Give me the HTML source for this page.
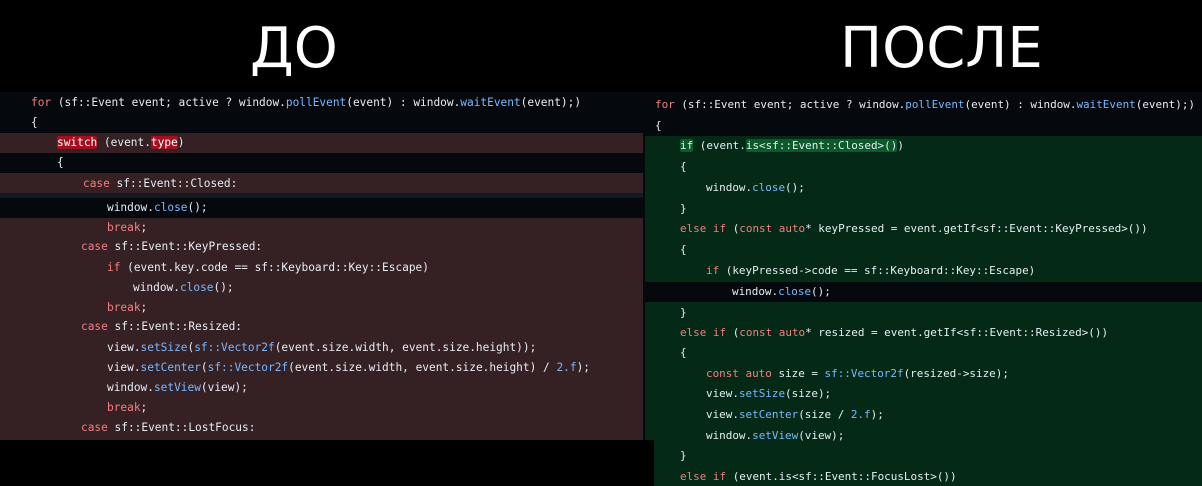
<!DOCTYPE html>
<html><head><meta charset="utf-8"><style>
body{margin:0;width:1202px;height:486px;background:#000;position:relative;overflow:hidden;font-family:"DejaVu Sans Mono","Liberation Mono",monospace;}
.t{position:absolute;top:16px;color:#fff;font-family:"DejaVu Sans","Liberation Sans",sans-serif;font-size:56px;line-height:66px;}
.p{position:absolute;background:#05080d;}
.b{position:absolute;}
.l{position:absolute;white-space:pre;color:#e6edf3;font-size:11.15px;line-height:14px;}
.r .l{font-size:10.95px;}
.k{color:#f47f7f}.f{color:#79b8ff}
.hl{background:#a40e1f;color:#fff;border-radius:2px}
.hg{background:#0b5a2a;border-radius:2px;color:#e6edf3}
</style></head><body>
<div class="t" style="left:250px">ДО</div>
<div class="t" style="left:840px">ПОСЛЕ</div>

<div class="p r" style="left:643px;top:92px;width:559px;height:394px">
<div class="b" style="left:2px;top:44px;width:557px;height:146px;background:#042a17"></div>
<div class="b" style="left:2px;top:210px;width:557px;height:184px;background:#042a17"></div>
</div>
<div class="b" style="left:643px;top:440px;width:11px;height:46px;background:#000"></div>

<div class="p" style="left:0;top:92px;width:643px;height:348px">
<div class="b" style="left:0;top:41px;width:643px;height:20px;background:#352024"></div>
<div class="b" style="left:0;top:81px;width:643px;height:20px;background:#352024"></div>
<div class="b" style="left:0;top:101px;width:643px;height:5px;background:#141820"></div>
<div class="b" style="left:0;top:126px;width:643px;height:222px;background:#352024"></div>
</div>

<div class="l" style="left:31px;top:96px"><span class="k">for</span> (sf::Event event; active ? window.<span class="f">pollEvent</span>(event) : window.<span class="f">waitEvent</span>(event);)</div>
<div class="l" style="left:31px;top:116px">{</div>
<div class="l" style="left:57px;top:136px"><span class="hl">switch</span> (event.<span class="hl">type</span>)</div>
<div class="l" style="left:57px;top:156px">{</div>
<div class="l" style="left:83px;top:177px"><span class="k">case</span> sf::Event::Closed:</div>
<div class="l" style="left:107px;top:201px">window.<span class="f">close</span>();</div>
<div class="l" style="left:107px;top:221px"><span class="k">break</span>;</div>
<div class="l" style="left:81px;top:240px"><span class="k">case</span> sf::Event::KeyPressed:</div>
<div class="l" style="left:107px;top:261px"><span class="k">if</span> (event.key.code == sf::Keyboard::Key::Escape)</div>
<div class="l" style="left:133px;top:281px">window.<span class="f">close</span>();</div>
<div class="l" style="left:107px;top:301px"><span class="k">break</span>;</div>
<div class="l" style="left:81px;top:320px"><span class="k">case</span> sf::Event::Resized:</div>
<div class="l" style="left:107px;top:341px">view.<span class="f">setSize</span>(<span class="f">sf::Vector2f</span>(event.size.width, event.size.height));</div>
<div class="l" style="left:107px;top:361px">view.<span class="f">setCenter</span>(<span class="f">sf::Vector2f</span>(event.size.width, event.size.height) / <span class="f">2.f</span>);</div>
<div class="l" style="left:107px;top:381px">window.<span class="f">setView</span>(view);</div>
<div class="l" style="left:107px;top:401px"><span class="k">break</span>;</div>
<div class="l" style="left:81px;top:421px"><span class="k">case</span> sf::Event::LostFocus:</div>

<div class="r">
<div class="l" style="left:655px;top:98px"><span class="k">for</span> (sf::Event event; active ? window.<span class="f">pollEvent</span>(event) : window.<span class="f">waitEvent</span>(event);)</div>
<div class="l" style="left:655px;top:119px">{</div>
<div class="l" style="left:680px;top:139px"><span class="hg">if</span> (event.<span class="hg">is&lt;sf::Event::Closed&gt;()</span>)</div>
<div class="l" style="left:680px;top:160px">{</div>
<div class="l" style="left:706px;top:181px">window.<span class="f">close</span>();</div>
<div class="l" style="left:680px;top:202px">}</div>
<div class="l" style="left:680px;top:222px"><span class="k">else if</span> (<span class="k">const auto</span>* keyPressed = event.getIf&lt;sf::Event::KeyPressed&gt;())</div>
<div class="l" style="left:680px;top:243px">{</div>
<div class="l" style="left:706px;top:264px"><span class="k">if</span> (keyPressed-&gt;code == sf::Keyboard::Key::Escape)</div>
<div class="l" style="left:732px;top:285px">window.<span class="f">close</span>();</div>
<div class="l" style="left:680px;top:306px">}</div>
<div class="l" style="left:680px;top:326px"><span class="k">else if</span> (<span class="k">const auto</span>* resized = event.getIf&lt;sf::Event::Resized&gt;())</div>
<div class="l" style="left:680px;top:346px">{</div>
<div class="l" style="left:706px;top:367px"><span class="k">const auto</span> size = <span class="f">sf::Vector2f</span>(resized-&gt;size);</div>
<div class="l" style="left:706px;top:387px">view.<span class="f">setSize</span>(size);</div>
<div class="l" style="left:706px;top:408px">view.<span class="f">setCenter</span>(size / <span class="f">2.f</span>);</div>
<div class="l" style="left:706px;top:429px">window.<span class="f">setView</span>(view);</div>
<div class="l" style="left:680px;top:449px">}</div>
<div class="l" style="left:680px;top:470px"><span class="k">else if</span> (event.is&lt;sf::Event::FocusLost&gt;())</div>
</div>
</body></html>
